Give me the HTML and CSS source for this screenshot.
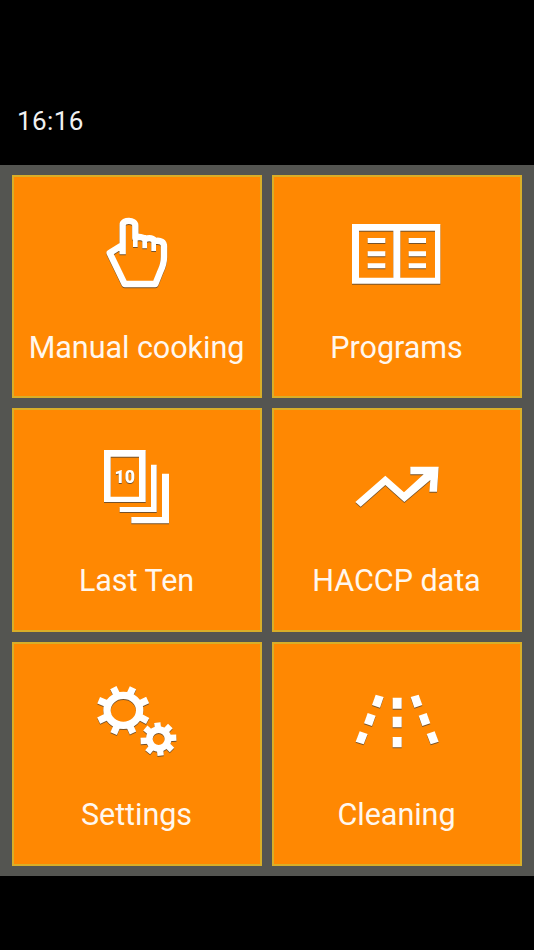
FILE: index.html
```html
<!DOCTYPE html>
<html lang="en">
<head>
  <meta charset="UTF-8" />
  <meta name="viewport" content="width=device-width, initial-scale=1" />
  <title>Oven Menu</title>
  <link rel="stylesheet" href="styles.css">
</head>
<body>
  <header class="status-bar">
    <span class="clock">16:16</span>
  </header>
  <main class="menu">
    <button class="tile">
      <svg class="icon" viewBox="0 0 330 300">
        <g transform="translate(24 0)">
          <path class="line hand" d="M98 148V60C98 43 136 43 136 62V98C146 94 160 96 166 102C178 97 188 99 196 108C212 105 222 112 222 124V156C222 174 216 190 210 202L196 237H104L59 144L94 122"/>
          <path class="line notch" d="M136 95V126M164 100V130M191 105V138"/>
        </g>
      </svg>
      <span class="label">Manual cooking</span>
    </button>
    <button class="tile">
      <svg class="icon" viewBox="0 0 330 300">
        <g transform="translate(-6 0)">
          <path class="solid" fill-rule="evenodd" d="M36 57H301V236H36ZM57 77V218H160V77ZM181 77V218H285V77Z"/>
          <path class="solid" d="M83 99H136V114H83ZM83 139H136V154H83ZM83 175H136V190H83ZM206 99H258V114H206ZM206 139H258V154H206ZM206 175H258V190H206Z"/>
        </g>
      </svg>
      <span class="label">Programs</span>
    </button>
    <button class="tile">
      <svg class="icon" viewBox="0 0 330 300">
        <g transform="translate(24 -12)">
          <path class="solid" fill-rule="evenodd" d="M42 45H167V201H42ZM62 65V185H147V65Z"/>
          <path class="solid" d="M183 89H200V231H89V216H183ZM216 116H237V265H124V246H216Z"/>
          <text class="count" x="104" y="143">10</text>
        </g>
      </svg>
      <span class="label">Last Ten</span>
    </button>
    <button class="tile">
      <svg class="icon" viewBox="0 0 330 300">
        <g transform="translate(9 32)">
          <path class="solid" d="M31 157L121 78L177 128L236 74H196V51H281L276 126H253L256 91L178 157L121 106L47 171Z"/>
        </g>
      </svg>
      <span class="label">HACCP data</span>
    </button>
    <button class="tile">
      <svg class="icon" viewBox="0 0 330 300">
        <g transform="translate(9 5)">
          <ellipse class="line ring" cx="115" cy="107" rx="49" ry="45"/>
          <path class="line teeth" d="M98 65L85 39M132 65L144 39M160 89L188 76M160 124L188 139M132 149L144 175M98 149L86 177M70 124L41 138M70 89L41 77"/>
          <circle class="line ring-small" cx="221" cy="193" r="28"/>
          <path class="line teeth-small" d="M219 162L217 144M242 169L256 154M252 190L274 189M246 211L261 226M225 224L227 243M201 217L188 233M190 198L167 199M197 174L181 160"/>
        </g>
      </svg>
      <span class="label">Settings</span>
    </button>
    <button class="tile">
      <svg class="icon" viewBox="0 0 330 300">
        <g transform="translate(9 20)">
          <path class="solid" d="M143 54H170V87H143ZM143 111H170V143H143ZM143 172H170V203H143Z"/>
          <path class="solid" d="M92 45L116 52L105 84L81 76ZM68 100L92 108L81 139L57 131ZM44 155L68 163L56 194L32 186Z"/>
          <path class="solid" d="M221 45L197 52L208 84L232 76ZM245 100L221 108L232 139L256 131ZM269 155L245 163L257 194L281 186Z"/>
        </g>
      </svg>
      <span class="label">Cleaning</span>
    </button>
  </main>
</body>
</html>
```
FILE: styles.css
```css
:root {
  --panel: #545551;
  --tile: #ff8802;
  --tile-border: #d9ae28;
  --text: #fff7ee;
}

* {
  box-sizing: border-box;
  margin: 0;
  padding: 0;
}

body {
  height: 950px;
  background: #000;
  font-family: Roboto, sans-serif;
  overflow: hidden;
}

.status-bar {
  height: 164.5px;
  padding: 106px 17px 0;
}

.clock {
  display: block;
  color: #f1f1f1;
  font-size: 26px;
  line-height: 31px;
  letter-spacing: 0.4px;
}

/* 2 x 3 grid of menu tiles */
.menu {
  display: grid;
  grid-template-columns: 250px 250px;
  grid-template-rows: repeat(3, 1fr);
  gap: 10px;
  height: 711.5px;
  padding: 10px 12px;
  background: var(--panel);
}

.tile {
  display: flex;
  flex-direction: column;
  align-items: center;
  padding-top: 28.5px;
  background: var(--tile);
  border: 2px solid var(--tile-border);
  color: var(--text);
  font-family: inherit;
  cursor: pointer;
}

.icon {
  width: 110px;
  height: 100px;
  overflow: visible;
  filter: drop-shadow(0 1.8px 0.6px rgba(60, 60, 60, 0.7));
}

.label {
  margin-top: 24.5px;
  padding-right: 1px;
  font-size: 30.5px;
  line-height: 36px;
  letter-spacing: -0.03px;
  white-space: nowrap;
}

.solid {
  fill: #fff;
}

.line {
  fill: none;
  stroke: #fff;
}

.hand {
  stroke-width: 19;
  stroke-linejoin: round;
}

.notch {
  stroke-width: 14;
}

.ring {
  stroke-width: 22;
}

.teeth {
  stroke-width: 21;
}

.ring-small {
  stroke-width: 20;
}

.teeth-small {
  stroke-width: 19;
}

.count {
  fill: #fff;
  font-size: 53px;
  font-weight: 900;
  text-anchor: middle;
}
```
